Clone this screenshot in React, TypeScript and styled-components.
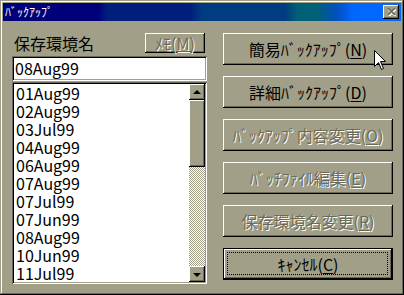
import { createGlobalStyle } from 'styled-components';
import styled from 'styled-components';

// ===== PALETTE (olive Win98 scheme) =====
const face = '#a19f87';
const shade = '#6b6a58';
const light = '#ffffff';
const dark = '#000000';

const raised = `
  inset -1px -1px ${dark},
  inset 1px 1px ${light},
  inset -2px -2px ${shade},
  inset 2px 2px ${face}
`;

const sunken = `
  inset 1px 1px ${shade},
  inset -1px -1px ${light},
  inset 2px 2px ${dark},
  inset -2px -2px ${face}
`;

const GlobalStyle = createGlobalStyle`
  html, body {
    margin: 0;
    padding: 0;
    background: ${face};
  }
  * {
    box-sizing: border-box;
  }
`;

const Dialog = styled.div`
  position: relative;
  width: 404px;
  height: 295px;
  padding: 3px;
  display: flex;
  flex-direction: column;
  background: ${face};
  font-family: 'Noto Sans CJK JP', 'Noto Sans', sans-serif;
  box-shadow:
    inset -1px -1px ${dark},
    inset 1px 1px ${face},
    inset -2px -2px ${shade},
    inset 2px 2px ${light};
`;

const TitleBar = styled.div`
  height: 18px;
  flex-shrink: 0;
  display: flex;
  align-items: center;
  justify-content: space-between;
  padding: 0 2px 0 2px;
  background: linear-gradient(
    90deg,
    #000078 0%,
    #000078 24%,
    #001e7c 26%,
    #001e7c 47%,
    #003c80 50%,
    #003c80 71%,
    #006078 74%,
    #006078 79%,
    #0050c0 84%,
    #0068ff 88%,
    #0068ff 100%
  );
`;

const TitleText = styled.span`
  color: #fff;
  font-size: 12px;
  line-height: 18px;
  letter-spacing: 0;
`;

const CloseButton = styled.div`
  width: 16px;
  height: 14px;
  background: ${face};
  box-shadow: ${raised};
  display: flex;
  align-items: center;
  justify-content: center;
`;

const Body = styled.div`
  flex: 1;
  display: flex;
  gap: 16px;
  padding: 12px 0 0 9px;
`;

const LeftColumn = styled.div`
  width: 195px;
  display: flex;
  flex-direction: column;
`;

const LabelRow = styled.div`
  height: 20px;
  display: flex;
  align-items: center;
  justify-content: space-between;
  padding-right: 2px;
`;

const Label = styled.span`
  font-size: 16px;
  line-height: 20px;
  color: #000;
  padding-left: 2px;
`;

const SmallButton = styled.div`
  width: 60px;
  height: 20px;
  background: ${face};
  box-shadow: ${raised};
  display: flex;
  align-items: center;
  justify-content: center;
  font-size: 16px;
  line-height: 20px;
  color: ${shade};
  text-shadow: 1px 1px 0 ${light};
`;

const TextBox = styled.div`
  margin-top: 3px;
  height: 25px;
  background: #fff;
  box-shadow: ${sunken};
  font-size: 16px;
  line-height: 25px;
  padding-left: 3px;
  color: #000;
`;

const ListBox = styled.div`
  margin-top: 1px;
  height: 202px;
  padding: 2px;
  background: #fff;
  box-shadow: ${sunken};
  display: flex;
`;

const Items = styled.div`
  flex: 1;
  overflow: hidden;
  padding-left: 2px;
`;

const Item = styled.div`
  height: 18px;
  font-size: 16px;
  line-height: 18px;
  color: #000;
`;

const ScrollBar = styled.div`
  width: 16px;
  display: flex;
  flex-direction: column;
`;

const ArrowButton = styled.div<{ $down?: boolean }>`
  width: 16px;
  height: 16px;
  flex-shrink: 0;
  background: ${face};
  box-shadow: ${raised};
  display: flex;
  align-items: center;
  justify-content: center;

  &::after {
    content: '';
    width: 0;
    height: 0;
    border-left: 4px solid transparent;
    border-right: 4px solid transparent;
    ${(p) =>
      p.$down
        ? `border-top: 4px solid ${dark}; margin-top: 1px;`
        : `border-bottom: 4px solid ${dark}; margin-top: -1px;`}
  }
`;

const Thumb = styled.div`
  height: 67px;
  flex-shrink: 0;
  background: ${face};
  box-shadow: ${raised};
`;

const Track = styled.div`
  flex: 1;
  background: repeating-conic-gradient(${light} 0% 25%, ${face} 0% 50%) 0 0 / 2px 2px;
`;

const RightColumn = styled.div`
  width: 170px;
  display: flex;
  flex-direction: column;
  gap: 11px;
`;

const Button = styled.div<{ $disabled?: boolean; $default?: boolean }>`
  position: relative;
  height: 32px;
  background: ${face};
  display: flex;
  align-items: center;
  justify-content: center;
  font-size: 16px;
  color: ${(p) => (p.$disabled ? shade : '#000')};
  text-shadow: ${(p) => (p.$disabled ? `1px 1px 0 ${light}` : 'none')};
  box-shadow: ${(p) =>
    p.$default
      ? `inset 0 0 0 1px ${dark},
         inset -2px -2px ${dark},
         inset 2px 2px ${light},
         inset -3px -3px ${shade}`
      : raised};

  u {
    text-decoration: underline;
    text-underline-offset: 2px;
  }
`;

const FocusRing = styled.span`
  position: absolute;
  inset: 4px 5px 5px 4px;
  border: 1px dotted #000;
  pointer-events: none;
`;

const Cursor = styled.svg`
  position: absolute;
  left: 374px;
  top: 50px;
`;

const dates = [
  '01Aug99',
  '02Aug99',
  '03Jul99',
  '04Aug99',
  '06Aug99',
  '07Aug99',
  '07Jul99',
  '07Jun99',
  '08Aug99',
  '10Jun99',
  '11Jul99',
  '12Jul99',
];

export default function App() {
  return (
    <>
      <GlobalStyle />
      <Dialog>
        <TitleBar>
          <TitleText>ﾊﾞｯｸｱｯﾌﾟ</TitleText>
          <CloseButton>
            <svg width="9" height="8" viewBox="0 0 9 8">
              <path d="M1 1 L8 8 M8 1 L1 8" stroke={light} strokeWidth="1.6" transform="translate(0.6,0.4)" />
              <path d="M1 0 L8 7 M8 0 L1 7" stroke={shade} strokeWidth="1.6" />
            </svg>
          </CloseButton>
        </TitleBar>

        <Body>
          <LeftColumn>
            <LabelRow>
              <Label>保存環境名</Label>
              <SmallButton>
                ﾒﾓ(<u>M</u>)
              </SmallButton>
            </LabelRow>
            <TextBox>08Aug99</TextBox>
            <ListBox>
              <Items>
                {dates.map((d) => (
                  <Item key={d}>{d}</Item>
                ))}
              </Items>
              <ScrollBar>
                <ArrowButton />
                <Thumb />
                <Track />
                <ArrowButton $down />
              </ScrollBar>
            </ListBox>
          </LeftColumn>

          <RightColumn>
            <Button>
              簡易ﾊﾞｯｸｱｯﾌﾟ(<u>N</u>)
            </Button>
            <Button>
              詳細ﾊﾞｯｸｱｯﾌﾟ(<u>D</u>)
            </Button>
            <Button $disabled>
              ﾊﾞｯｸｱｯﾌﾟ内容変更(<u>O</u>)
            </Button>
            <Button $disabled>
              ﾊﾞｯﾁﾌｧｲﾙ編集(<u>E</u>)
            </Button>
            <Button $disabled>
              保存環境名変更(<u>R</u>)
            </Button>
            <Button $default>
              <FocusRing />
              ｷｬﾝｾﾙ(<u>C</u>)
            </Button>
          </RightColumn>
        </Body>

        {/* mouse pointer over the first button */}
        <Cursor width="13" height="21" viewBox="0 0 13 21">
          <path
            d="M0.5 0.5 L0.5 16.5 L4.5 12.5 L7.5 19.5 L9.5 18.5 L6.5 11.5 L11.5 11.5 Z"
            fill="#fff"
            stroke="#000"
            strokeWidth="1"
          />
        </Cursor>
      </Dialog>
    </>
  );
}
